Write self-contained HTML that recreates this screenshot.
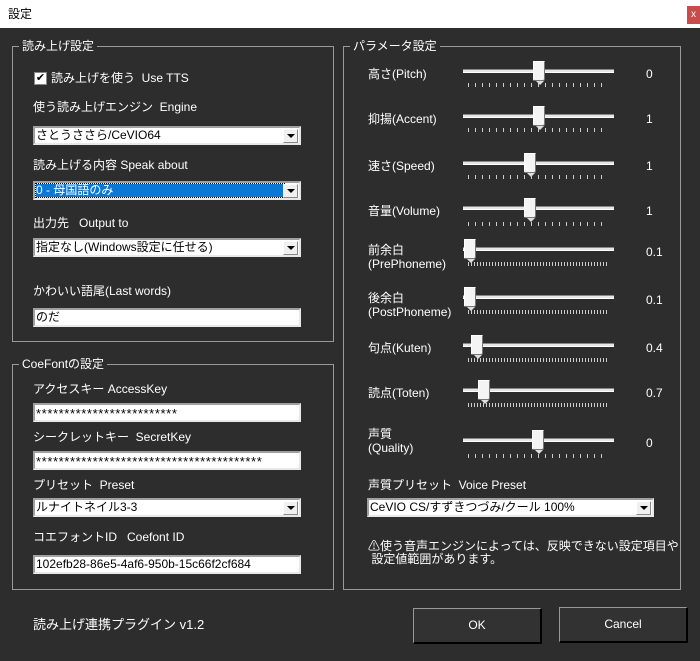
<!DOCTYPE html>
<html><head><meta charset="utf-8"><style>
*{margin:0;padding:0;box-sizing:border-box}
body{width:700px;height:661px;background:#2d2d2d;position:relative;overflow:hidden;font-family:"Liberation Sans","Noto Sans CJK JP",sans-serif;font-size:12px;color:#fff}
.a{position:absolute;white-space:nowrap;line-height:14px}
.title{position:absolute;left:0;top:0;width:700px;height:28px;background:#fff;color:#000}
.grp{position:absolute;border:1px solid #9a9a9a;border-top-color:#9a9a9a}
.lg{position:absolute;top:-8px;left:6px;background:#2d2d2d;padding:0 3px;line-height:14px}
.box{position:absolute;background:#fff;color:#000;border:2px solid #a0a0a0;border-right-color:#e8e8e8;border-bottom-color:#e8e8e8;height:19px;line-height:14px;padding-left:1px;font-size:12px;overflow:hidden;white-space:nowrap}
.cb{position:absolute;right:1px;top:1px;width:15px;height:14px;background:#f0f0f0;border:1px solid #888;border-left-color:#fff;border-top-color:#fff}
.cb:after{content:"";position:absolute;left:3px;top:4px;border-left:4px solid transparent;border-right:4px solid transparent;border-top:4px solid #000}
.tr{position:absolute;height:4px;background:#e6e6e6;border-top:1px solid #888;border-bottom:1px solid #fff;width:151px;left:463px}
.th{position:absolute;width:12px;height:20px;background:#f4f4f4;border:1px solid #777;border-top-color:#fff;border-left-color:#fff;border-radius:0 0 2px 2px}
.th:after{content:"";position:absolute;left:2px;bottom:-5px;border-left:4px solid transparent;border-right:4px solid transparent;border-top:4px solid #ddd}
.tk{position:absolute;left:468px;width:140px;height:4px}
.s{background:repeating-linear-gradient(90deg,#ccc 0 1px,transparent 1px 7px)}
.d{background:repeating-linear-gradient(90deg,#ccc 0 1px,transparent 1px 3px)}
.btn{position:absolute;border:1px solid #999;border-right:2px solid #000;border-bottom:2px solid #000;background:#323232;text-align:center}
.ast{font-size:13px;letter-spacing:0.6px;line-height:17px}
</style></head><body>
<div class="title"><div class="a" style="left:8px;top:7px">設定</div>
<div style="position:absolute;left:687px;top:6px;width:13px;height:18px;background:#c94c4c;color:#fff;font-size:10px;text-align:center;line-height:17px">x</div></div>

<div class="grp" style="left:12px;top:46px;width:322px;height:296px"><div class="lg">読み上げ設定</div></div>
<div style="position:absolute;left:34px;top:72px;width:13px;height:13px;background:#fff;border:1px solid #888;color:#000;font-size:11px;line-height:11px;text-align:center">✔</div>
<div class="a" style="left:51px;top:71px">読み上げを使う&nbsp; Use TTS</div>
<div class="a" style="left:33px;top:100px">使う読み上げエンジン&nbsp; Engine</div>
<div class="box" style="left:33px;top:126px;width:268px">さとうささら/CeVIO64<div class="cb"></div></div>
<div class="a" style="left:33px;top:158px">読み上げる内容 Speak about</div>
<div class="box" style="left:33px;top:181px;width:268px;padding:1px"><div style="background:#0a78d7;color:#fff;height:13px;width:248px;outline:1px dotted #000;line-height:13px">0 - 母国語のみ</div><div class="cb"></div></div>
<div class="a" style="left:33px;top:216px">出力先&nbsp;&nbsp; Output to</div>
<div class="box" style="left:33px;top:238px;width:268px">指定なし(Windows設定に任せる)<div class="cb"></div></div>
<div class="a" style="left:33px;top:284px">かわいい語尾(Last words)</div>
<div class="box" style="left:33px;top:308px;width:268px">のだ</div>

<div class="grp" style="left:12px;top:364px;width:322px;height:226px"><div class="lg">CoeFontの設定</div></div>
<div class="a" style="left:33px;top:382px">アクセスキー AccessKey</div>
<div class="box ast" style="left:33px;top:403px;width:268px">*************************</div>
<div class="a" style="left:33px;top:430px">シークレットキー&nbsp; SecretKey</div>
<div class="box ast" style="left:33px;top:451px;width:268px">****************************************</div>
<div class="a" style="left:33px;top:478px">プリセット&nbsp; Preset</div>
<div class="box" style="left:33px;top:498px;width:268px">ルナイトネイル3-3<div class="cb"></div></div>
<div class="a" style="left:33px;top:530px">コエフォントID&nbsp;&nbsp; Coefont ID</div>
<div class="box" style="left:33px;top:555px;width:268px">102efb28-86e5-4af6-950b-15c66f2cf684</div>

<div class="grp" style="left:343px;top:46px;width:338px;height:544px"><div class="lg">パラメータ設定</div></div>

<div class="a" style="left:368px;top:67px">高さ(Pitch)</div>
<div class="tr" style="top:69px"></div><div class="th" style="left:533px;top:61px"></div><div class="tk s" style="top:83px"></div>
<div class="a" style="left:646px;top:67px">0</div>

<div class="a" style="left:368px;top:112px">抑揚(Accent)</div>
<div class="tr" style="top:114px"></div><div class="th" style="left:533px;top:106px"></div><div class="tk s" style="top:128px"></div>
<div class="a" style="left:646px;top:112px">1</div>

<div class="a" style="left:368px;top:159px">速さ(Speed)</div>
<div class="tr" style="top:161px"></div><div class="th" style="left:524px;top:153px"></div><div class="tk s" style="top:175px"></div>
<div class="a" style="left:646px;top:159px">1</div>

<div class="a" style="left:368px;top:204px">音量(Volume)</div>
<div class="tr" style="top:206px"></div><div class="th" style="left:524px;top:198px"></div><div class="tk s" style="top:222px"></div>
<div class="a" style="left:646px;top:204px">1</div>

<div class="a" style="left:368px;top:243px">前余白<br>(PrePhoneme)</div>
<div class="tr" style="top:247px"></div><div class="th" style="left:464px;top:239px"></div><div class="tk d" style="top:262px"></div>
<div class="a" style="left:646px;top:245px">0.1</div>

<div class="a" style="left:368px;top:291px">後余白<br>(PostPhoneme)</div>
<div class="tr" style="top:295px"></div><div class="th" style="left:464px;top:287px"></div><div class="tk d" style="top:310px"></div>
<div class="a" style="left:646px;top:293px">0.1</div>

<div class="a" style="left:368px;top:341px">句点(Kuten)</div>
<div class="tr" style="top:343px"></div><div class="th" style="left:471px;top:335px"></div><div class="tk d" style="top:358px"></div>
<div class="a" style="left:646px;top:341px">0.4</div>

<div class="a" style="left:368px;top:386px">読点(Toten)</div>
<div class="tr" style="top:388px"></div><div class="th" style="left:478px;top:380px"></div><div class="tk d" style="top:403px"></div>
<div class="a" style="left:646px;top:386px">0.7</div>

<div class="a" style="left:368px;top:427px">声質<br>(Quality)</div>
<div class="tr" style="top:438px"></div><div class="th" style="left:532px;top:430px"></div><div class="tk s" style="top:454px"></div>
<div class="a" style="left:646px;top:436px">0</div>

<div class="a" style="left:368px;top:478px">声質プリセット&nbsp; Voice Preset</div>
<div class="box" style="left:367px;top:498px;width:287px">CeVIO CS/すずきつづみ/クール 100%<div class="cb"></div></div>
<div class="a" style="left:368px;top:540px;line-height:13px">⚠使う音声エンジンによっては、反映できない設定項目や<br>&nbsp;設定値範囲があります。</div>

<div class="a" style="left:33px;top:617px;font-size:13px;line-height:16px">読み上げ連携プラグイン v1.2</div>
<div class="btn" style="left:413px;top:608px;width:129px;height:36px;line-height:32px">OK</div>
<div class="btn" style="left:559px;top:607px;width:129px;height:36px;line-height:32px">Cancel</div>
</body></html>
